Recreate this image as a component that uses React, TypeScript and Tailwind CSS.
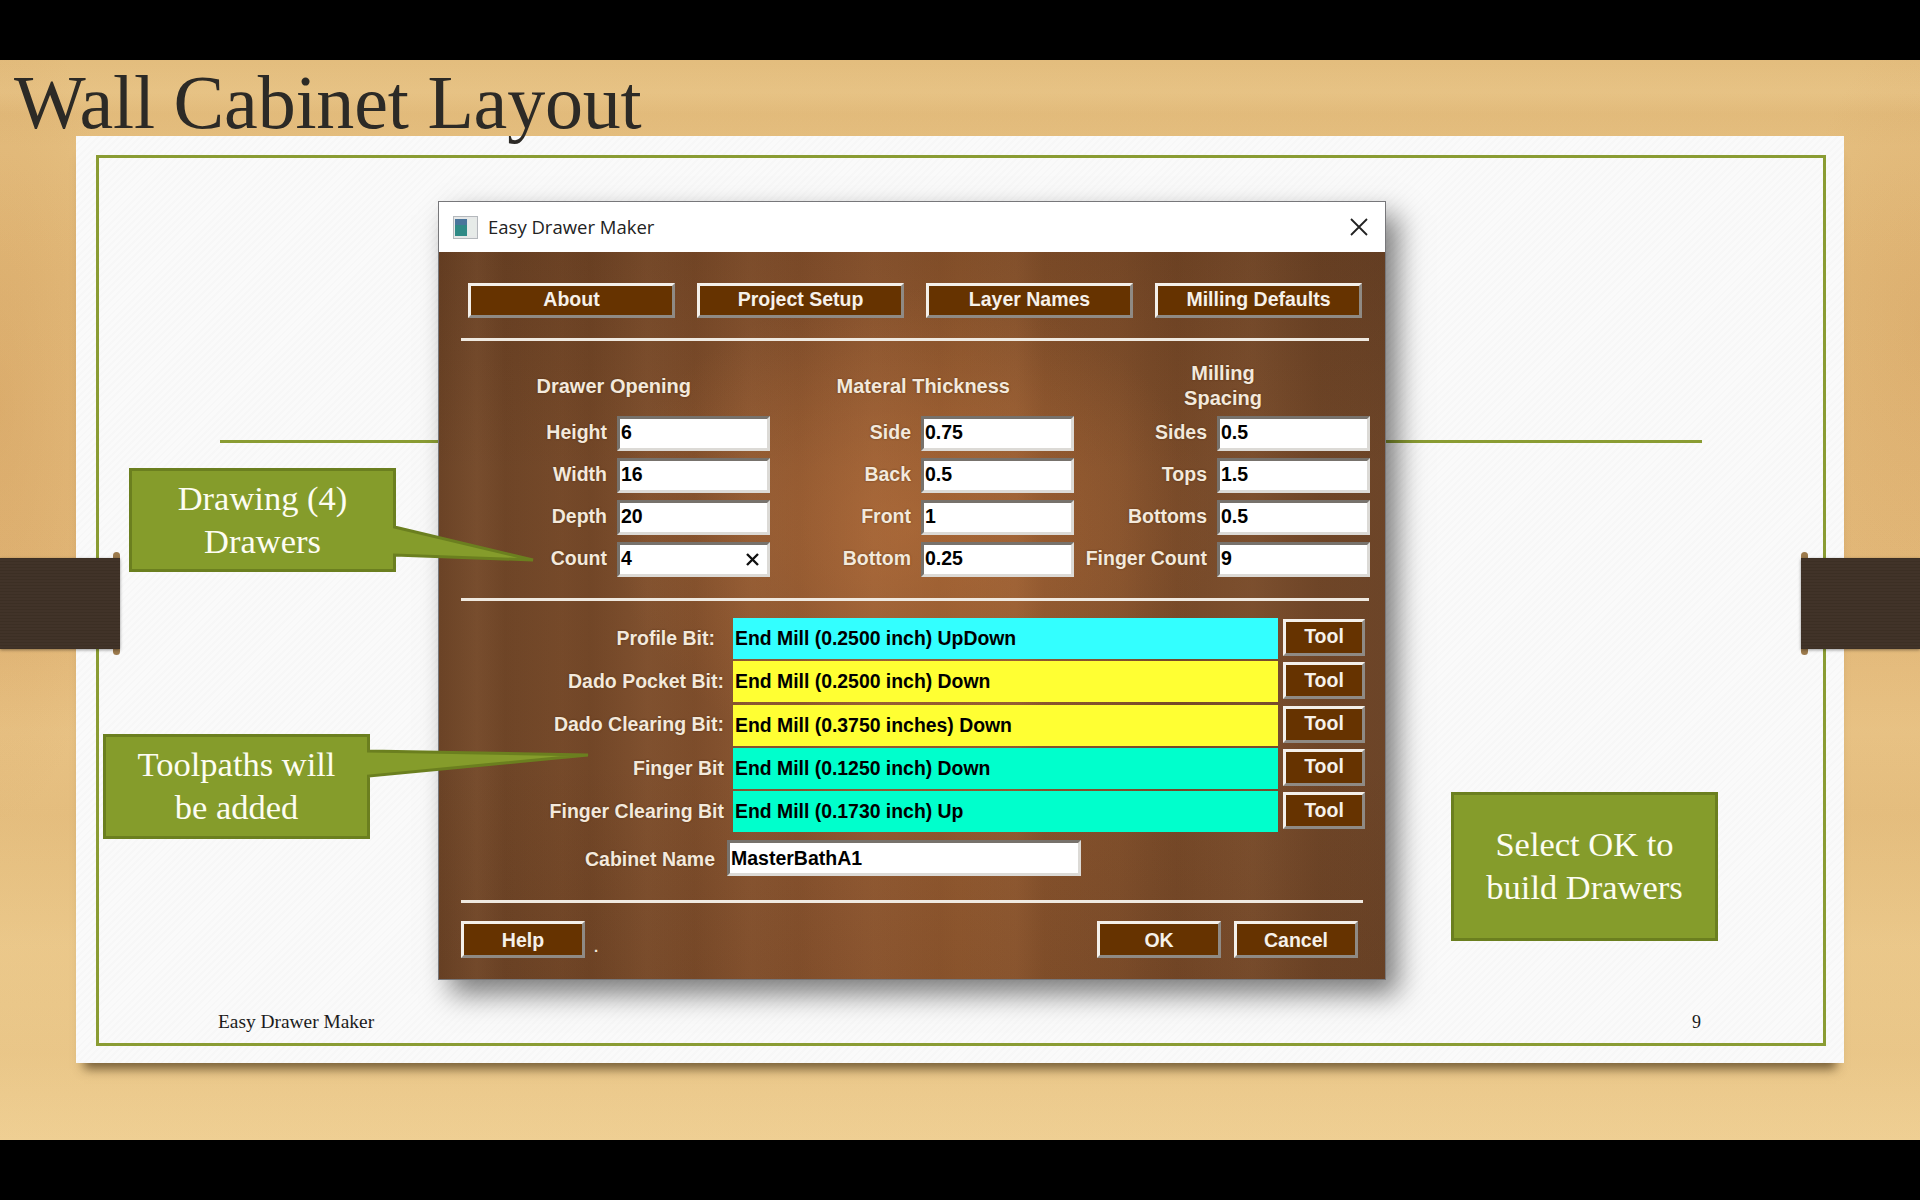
import React from "react";

const woodBody =
  "bg-[linear-gradient(90deg,rgba(60,30,10,0.10)_0%,rgba(255,200,150,0.04)_4%,rgba(60,30,10,0.09)_7%,rgba(60,30,10,0.02)_13%,rgba(60,30,10,0.10)_16%,rgba(255,200,150,0.03)_22%,rgba(60,30,10,0.05)_27%,rgba(255,200,150,0.03)_33%,rgba(60,30,10,0.03)_38%,rgba(255,200,150,0.03)_46%,rgba(60,30,10,0.03)_53%,rgba(255,200,150,0.03)_61%,rgba(60,30,10,0.05)_64%,rgba(60,30,10,0.02)_72%,rgba(60,30,10,0.10)_78%,rgba(255,200,150,0.03)_86%,rgba(60,30,10,0.08)_93%,rgba(60,30,10,0.03)_100%),radial-gradient(ellipse_300px_240px_at_50%_38%,rgba(180,110,58,0.65),rgba(180,110,58,0)),linear-gradient(180deg,rgba(60,30,10,0.18)_0%,rgba(60,30,10,0)_30%,rgba(60,30,10,0)_70%,rgba(60,30,10,0.10)_100%),linear-gradient(90deg,#704729_0%,#7a4c2b_20%,#8d5630_42%,#935a30_55%,#7f4f2c_75%,#6e4629_100%)]";

const btn =
  "flex items-center justify-center bg-[#663300] border-[3px] border-t-[#f4f0ea] border-l-[#f4f0ea] border-r-[#8f8a84] border-b-[#8f8a84] text-[#f6f1ea] font-bold text-[19.5px]";

const label = "text-[#f3e9dc] font-bold text-[19.5px] [text-shadow:0_0_2px_rgba(60,30,5,0.6)]";
const head = "text-[#f3e9dc] font-bold text-[20px] [text-shadow:0_0_2px_rgba(60,30,5,0.6)]";

const fieldBorder =
  "bg-white border-[3px] border-t-[#77726c] border-l-[#77726c] border-r-[#dcdad6] border-b-[#dcdad6] text-black font-bold text-[19.5px]";

const columns = [
  {
    width: "w-[309px]",
    head: (
      <div className={`${head} h-[60px] flex items-center justify-end pr-[79px] pt-[1px]`}>Drawer Opening</div>
    ),
    rows: [
      ["Height", "6"],
      ["Width", "16"],
      ["Depth", "20"],
      ["Count", "4"],
    ],
  },
  {
    width: "w-[304px]",
    head: (
      <div className={`${head} h-[60px] flex items-center justify-end pr-[64px] pt-[1px]`}>Materal Thickness</div>
    ),
    rows: [
      ["Side", "0.75"],
      ["Back", "0.5"],
      ["Front", "1"],
      ["Bottom", "0.25"],
    ],
  },
  {
    width: "w-[296px]",
    head: (
      <div className={`${head} h-[60px] flex flex-col items-center justify-center pl-[2px] pt-[1px] leading-[25px]`}>
        <span>Milling</span>
        <span>Spacing</span>
      </div>
    ),
    rows: [
      ["Sides", "0.5"],
      ["Tops", "1.5"],
      ["Bottoms", "0.5"],
      ["Finger Count", "9"],
    ],
  },
];

const bits = [
  { name: "Profile Bit:", pad: "pr-[18px]", text: "End Mill (0.2500 inch) UpDown", bg: "bg-[#33ffff]" },
  { name: "Dado Pocket Bit:", pad: "pr-[9px]", text: "End Mill (0.2500 inch) Down", bg: "bg-[#ffff33]" },
  { name: "Dado Clearing Bit:", pad: "pr-[9px]", text: "End Mill (0.3750 inches) Down", bg: "bg-[#ffff33]" },
  { name: "Finger Bit", pad: "pr-[9px]", text: "End Mill (0.1250 inch) Down", bg: "bg-[#00ffcc]" },
  { name: "Finger Clearing Bit", pad: "pr-[9px]", text: "End Mill (0.1730 inch) Up", bg: "bg-[#00ffcc]" },
];

const Callout = ({ className, path, lines }: { className: string; path: string; lines: string[] }) => (
  <div className={`absolute z-20 ${className}`}>
    <svg className="absolute inset-0 overflow-visible" width="100%" height="100%">
      <path d={path} fill="#859c2b" stroke="#6b7f1f" strokeWidth="3" />
    </svg>
    <div className="relative h-full pb-[1px] flex flex-col items-center justify-center text-[#fdfdf2] text-[34.5px] leading-[43px]">
      {lines.map((l) => (
        <span key={l}>{l}</span>
      ))}
    </div>
  </div>
);

const Band = ({ side }: { side: "left" | "right" }) => (
  <div className={side === "left" ? "absolute z-10 left-[-76px] top-[422px] w-[120px] h-[91px]" : "absolute z-10 right-[-76px] top-[422px] w-[119px] h-[91px]"}>
    <div className={side === "left" ? "absolute right-0 top-[-6px] w-[7px] h-[103px] rounded-full bg-[#9c7a4c]" : "absolute left-0 top-[-6px] w-[7px] h-[103px] rounded-full bg-[#9c7a4c]"} />
    <div className="relative h-full bg-[#3f3126] bg-[repeating-linear-gradient(0deg,rgba(0,0,0,0.05)_0px,rgba(0,0,0,0.05)_1px,rgba(255,255,255,0.01)_1px,rgba(255,255,255,0.01)_3px)] shadow-[0_1px_3px_rgba(0,0,0,0.4)]" />
  </div>
);

export default function App() {
  return (
    <div className="w-[1920px] h-[1200px] flex flex-col bg-black overflow-hidden font-['Liberation_Serif',serif]">
      <div className="h-[60px] shrink-0 bg-black" />
      <div className="h-[1080px] shrink-0 bg-[radial-gradient(ellipse_120px_420px_at_0%_32%,rgba(190,125,60,0.2),rgba(190,125,60,0)),radial-gradient(ellipse_130px_300px_at_100%_25%,rgba(190,125,60,0.15),rgba(190,125,60,0)),linear-gradient(180deg,rgba(170,110,40,0.05)_0%,rgba(255,240,200,0.05)_3%,rgba(170,110,40,0.06)_5%,rgba(170,110,40,0)_8%,rgba(170,110,40,0.05)_52%,rgba(255,240,200,0.05)_62%,rgba(170,110,40,0.05)_70%,rgba(255,240,200,0.04)_82%,rgba(170,110,40,0.04)_92%,rgba(255,240,200,0.05)_100%),linear-gradient(180deg,#e6c182_0%,#e3ba7a_20%,#e5bb7c_50%,#e8c384_75%,#eecd90_100%)]">
        <h1 className="relative z-20 h-[76px] pl-[14px] pt-[1px] text-[#2c2a26] text-[76px] leading-[82px] tracking-[-0.2px] whitespace-nowrap">
          Wall Cabinet Layout
        </h1>

        {/* paper */}
        <div className="relative ml-[76px] w-[1768px] h-[927px] bg-[#fafafa] bg-[repeating-linear-gradient(135deg,rgba(0,0,0,0.012)_0px,rgba(0,0,0,0.012)_2px,rgba(255,255,255,0)_2px,rgba(255,255,255,0)_5px)] shadow-[0_14px_10px_-8px_rgba(70,50,20,0.7)]">
          <div className="absolute left-[20px] top-[19px] w-[1730px] h-[891px] border-[3px] border-[#8a9c33]" />
          <div className="absolute left-[144px] top-[304px] w-[1482px] h-[3px] bg-[#8a9c33]" />
          <Band side="left" />
          <Band side="right" />

          <Callout
            className="left-[54px] top-[333px] w-[265px] h-[102px]"
            path="M0.5 0.5H264.5V58L403 91L264.5 86V101.5H0.5Z"
            lines={["Drawing (4)", "Drawers"]}
          />
          <Callout
            className="left-[28px] top-[599px] w-[265px] h-[103px]"
            path="M0.5 0.5H264.5V16L484 20L264.5 41V102.5H0.5Z"
            lines={["Toolpaths will", "be added"]}
          />
          <Callout
            className="left-[1376px] top-[657px] w-[265px] h-[147px]"
            path="M0.5 0.5H264.5V146.5H0.5Z"
            lines={["Select OK to", "build Drawers"]}
          />

          {/* dialog */}
          <div className="absolute z-10 left-[362px] top-[65px] w-[948px] h-[779px] flex flex-col border border-[#77777a] bg-white font-['Liberation_Sans',sans-serif] shadow-[12px_14px_26px_rgba(0,0,0,0.5)]">
            <div className="h-[50px] shrink-0 flex items-center pl-[14px] pr-[17px] bg-white">
              <svg width="25" height="23" viewBox="0 0 25 23">
                <rect x="0.5" y="0.5" width="24" height="22" fill="#e6e8e8" stroke="#b4b8bc" />
                <rect x="2" y="3" width="12" height="17" fill="#2f8a86" />
                <rect x="2" y="3" width="12" height="6" fill="#49759b" />
                <rect x="15" y="3" width="8" height="17" fill="#e6ebe8" />
              </svg>
              <span className="ml-[10px] text-[#222] text-[18.5px] font-['Open_Sans',sans-serif]">Easy Drawer Maker</span>
              <svg className="ml-auto" width="18" height="18" viewBox="0 0 18 18">
                <path d="M1 1L17 17M17 1L1 17" stroke="#222" strokeWidth="1.8" fill="none" />
              </svg>
            </div>

            <div className={`flex-1 pl-[22px] ${woodBody}`}>
              <div className="flex gap-[22px] pl-[7px] pt-[31px]">
                {["About", "Project Setup", "Layer Names", "Milling Defaults"].map((t) => (
                  <div key={t} className={`${btn} w-[207px] h-[35px] pb-[1px]`}>
                    {t}
                  </div>
                ))}
              </div>
              <div className="mt-[20px] w-[908px] h-[3px] bg-[#efe9e0]" />

              <div className="flex mt-[14px]">
                {columns.map((c) => (
                  <div key={c.rows[0][0]} className={`${c.width} flex flex-col items-end`}>
                    <div className="w-full">{c.head}</div>
                    <div className="flex flex-col gap-[7px] mt-[1px]">
                      {c.rows.map(([name, value]) => (
                        <div key={name} className="flex items-center justify-end gap-[10px]">
                          <span className={`${label} whitespace-nowrap pb-[1px]`}>{name}</span>
                          <div className={`w-[153px] h-[35px] flex items-center justify-between pl-[1px] pr-[7px] pb-[1px] ${fieldBorder}`}>
                            <span>{value}</span>
                            {name === "Count" && (
                              <svg width="15" height="13" viewBox="0 0 15 13">
                                <path d="M2 1L13 12M13 1L2 12" stroke="#111" strokeWidth="2.4" fill="none" />
                              </svg>
                            )}
                          </div>
                        </div>
                      ))}
                    </div>
                  </div>
                ))}
              </div>

              <div className="mt-[21px] w-[908px] h-[3px] bg-[#efe9e0]" />

              <div className="flex flex-col gap-[2.3px] mt-[17px]">
                {bits.map((b) => (
                  <div key={b.name} className="flex items-center h-[41px]">
                    <span className={`${label} w-[272px] text-right whitespace-nowrap ${b.pad}`}>{b.name}</span>
                    <div className={`w-[545px] h-[41px] flex items-center pl-[2px] text-black font-bold text-[19.4px] ${b.bg}`}>
                      {b.text}
                    </div>
                    <div className={`${btn} w-[82px] h-[37px] ml-[5px] mb-[2px] pb-[1px]`}>Tool</div>
                  </div>
                ))}
              </div>

              <div className="flex items-center mt-[8px]">
                <span className={`${label} w-[254px] pt-[2px] text-right`}>Cabinet Name</span>
                <div className={`ml-[12px] w-[354px] h-[36px] flex items-center pl-[1px] pt-[1px] ${fieldBorder}`}>
                  MasterBathA1
                </div>
              </div>

              <div className="mt-[24px] w-[902px] h-[3px] bg-[#efe9e0]" />

              <div className="flex items-start mt-[18px] pr-[27px]">
                <div className={`${btn} w-[124px] h-[37px] pt-[1px]`}>Help</div>
                <span className="ml-[9px] mt-[15px] text-[#f3e9dc] text-[15px] font-bold">.</span>
                <div className="ml-auto flex gap-[13px]">
                  <div className={`${btn} w-[124px] h-[37px] pt-[1px]`}>OK</div>
                  <div className={`${btn} w-[124px] h-[37px] pt-[1px]`}>Cancel</div>
                </div>
              </div>
            </div>
          </div>

          {/* footer text */}
          <span className="absolute left-[142px] top-[875px] text-[#1c1c1c] text-[19.4px] leading-[22px]">Easy Drawer Maker</span>
          <span className="absolute left-[1616px] top-[875px] text-[#1c1c1c] text-[18px] leading-[22px]">9</span>
        </div>
      </div>
      <div className="h-[60px] shrink-0 bg-black" />
    </div>
  );
}
